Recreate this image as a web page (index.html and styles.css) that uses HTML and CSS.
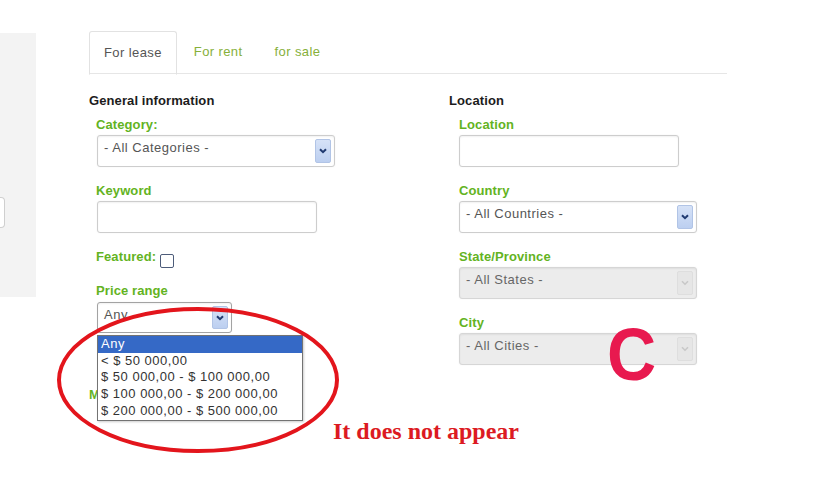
FILE: index.html
```html
<!DOCTYPE html>
<html lang="en">
<head>
  <meta charset="UTF-8" />
  <title>Property search</title>
  <link rel="stylesheet" href="styles.css">
</head>
<body>

  <div class="page">
    <aside class="side">
      <div class="side-input"></div>
    </aside>

    <main class="content">
      <ul class="tabs">
        <li class="tab active">For lease</li>
        <li class="tab">For rent</li>
        <li class="tab">for sale</li>
      </ul>

      <div class="columns">
        <section class="col col-left">
          <h3>General information</h3>

          <div class="field">
            <label>Category:</label>
            <div class="select w238">
              <span class="select-text">- All Categories -</span>
              <span class="select-btn"><svg width="8" height="6" viewBox="0 0 8 6"><path d="M1 1.2 L4 4.2 L7 1.2" fill="none" stroke="#203a70" stroke-width="2"/></svg></span>
            </div>
          </div>

          <div class="field">
            <label>Keyword</label>
            <div class="input w220"></div>
          </div>

          <div class="field field-check">
            <label>Featured:</label>
            <span class="checkbox"></span>
          </div>

          <div class="field field-price">
            <label>Price range</label>
            <div class="select select-focus w135">
              <span class="select-text">Any</span>
              <span class="select-btn"><svg width="8" height="6" viewBox="0 0 8 6"><path d="M1 1.2 L4 4.2 L7 1.2" fill="none" stroke="#203a70" stroke-width="2"/></svg></span>
            </div>
            <ul class="dropdown">
              <li class="selected">Any</li>
              <li>&lt; $ 50 000,00</li>
              <li>$ 50 000,00 - $ 100 000,00</li>
              <li>$ 100 000,00 - $ 200 000,00</li>
              <li>$ 200 000,00 - $ 500 000,00</li>
            </ul>
          </div>

          <div class="field field-more">
            <label>M</label>
          </div>
        </section>

        <section class="col col-right">
          <h3>Location</h3>

          <div class="field">
            <label>Location</label>
            <div class="input w220"></div>
          </div>

          <div class="field">
            <label>Country</label>
            <div class="select w238">
              <span class="select-text">- All Countries -</span>
              <span class="select-btn"><svg width="8" height="6" viewBox="0 0 8 6"><path d="M1 1.2 L4 4.2 L7 1.2" fill="none" stroke="#203a70" stroke-width="2"/></svg></span>
            </div>
          </div>

          <div class="field">
            <label>State/Province</label>
            <div class="select disabled w238">
              <span class="select-text">- All States -</span>
              <span class="select-btn"><svg width="8" height="6" viewBox="0 0 8 6"><path d="M1 1.2 L4 4.2 L7 1.2" fill="none" stroke="#c8c8c8" stroke-width="1.6"/></svg></span>
            </div>
          </div>

          <div class="field">
            <label>City</label>
            <div class="select disabled w238">
              <span class="select-text">- All Cities -</span>
              <span class="select-btn"><svg width="8" height="6" viewBox="0 0 8 6"><path d="M1 1.2 L4 4.2 L7 1.2" fill="none" stroke="#c8c8c8" stroke-width="1.6"/></svg></span>
            </div>
          </div>
        </section>
      </div>
    </main>
  </div>

  <!-- annotations drawn over the screenshot -->
  <svg class="annot-ellipse" width="829" height="490" viewBox="0 0 829 490">
    <ellipse cx="198" cy="380" rx="139" ry="71" fill="none" stroke="#e3151c" stroke-width="4"/>
  </svg>
  <div class="annot-text">It does not appear</div>
  <div class="annot-c">C</div>

</body>
</html>
```

FILE: styles.css
```css
* {
  box-sizing: border-box;
  margin: 0;
  padding: 0;
}

body {
  font-family: 'Liberation Sans', Arial, sans-serif;
  background-color: #ffffff;
  color: #333;
  width: 829px;
  height: 490px;
  overflow: hidden;
  position: relative;
}

.page {
  display: flex;
}

/* left grey strip */
.side {
  width: 36px;
  height: 264px;
  margin-top: 33px;
  background-color: #f3f3f3;
  overflow: hidden;
  padding-top: 164px;
}

.side-input {
  width: 5px;
  height: 31px;
  background-color: #fff;
  border: 1px solid #cfcfcf;
  border-left: none;
  border-radius: 0 4px 4px 0;
}

.content {
  margin-left: 53px;
  width: 638px;
}

/* tabs */
.tabs {
  list-style: none;
  display: flex;
  margin-top: 31px;
  height: 43px;
  border-bottom: 1px solid #e6e6e6;
}

.tab {
  padding: 0 16px;
  line-height: 42px;
  font-size: 13px;
  letter-spacing: 0.4px;
  color: #86b03a;
}

.tab.active {
  padding: 0 14px;
  color: #555;
  border: 1px solid #e2e2e2;
  border-bottom-color: #fff;
  border-radius: 3px 3px 0 0;
  line-height: 41px;
  height: 44px;
  margin-right: 1px;
}

/* columns */
.columns {
  display: flex;
  margin-top: 19px;
}

.col-left {
  width: 360px;
}

.col-right {
  flex: 1;
}

h3 {
  font-size: 13px;
  line-height: 16px;
  letter-spacing: 0.1px;
  color: #1c1c1c;
  margin-bottom: 9px;
}

.field {
  margin-bottom: 17px;
}

.col-left .field {
  padding-left: 7px;
}

.col-right .field {
  padding-left: 10px;
}

.field label {
  display: block;
  font-size: 13px;
  font-weight: bold;
  line-height: 14px;
  letter-spacing: 0.1px;
  color: #63b322;
  margin-bottom: 3px;
}

.col-left .field .input,
.col-left .field .select {
  margin-left: 1px;
}

.input,
.select {
  height: 32px;
  background-color: #fff;
  border: 1px solid #cdcdcd;
  border-radius: 3px;
  box-shadow: inset 0 1px 2px rgba(0, 0, 0, 0.06), 0 0 2px rgba(0, 0, 0, 0.05);
}

.w220 { width: 220px; }
.w238 { width: 238px; }
.w135 { width: 135px; }

.select {
  display: flex;
  align-items: flex-start;
}

.select-text {
  flex: 1;
  padding: 5px 0 0 6px;
  font-size: 13px;
  letter-spacing: 0.5px;
  line-height: 14px;
  color: #555;
  white-space: nowrap;
}

.select-btn {
  align-self: stretch;
  width: 16px;
  margin: 3px 3px 3px 0;
  display: flex;
  align-items: center;
  justify-content: center;
  background: linear-gradient(#d6e2f7, #bccff0);
  border: 1px solid #b1c4e6;
  border-radius: 2px;
}

.select.disabled {
  background-color: #ececec;
  border-color: #d6d6d6;
}

.select.disabled .select-text {
  color: #666;
}

.select.disabled .select-btn {
  background: #e6e6e6;
  border-color: #dedede;
}

/* featured checkbox row */
.field-check {
  display: flex;
  align-items: flex-start;
  height: 20px;
  margin-bottom: 14px;
}

.field-check label {
  margin-bottom: 0;
}

.checkbox {
  width: 14px;
  height: 14px;
  margin: 4px 0 0 4px;
  border: 1px solid #4d5c7a;
  border-radius: 2px;
  background-color: #fff;
}

/* price range with its open list */
.field-price {
  position: relative;
  margin-bottom: 0;
}

.field-price .select {
  height: 31px;
  margin-top: 4px;
}

.select-focus {
  border-color: #a3a3a3;
}

.dropdown {
  position: absolute;
  left: 8px;
  top: 51px;
  width: 206px;
  list-style: none;
  background-color: #fff;
  border: 1px solid #737373;
  box-shadow: 1px 1px 2px rgba(0, 0, 0, 0.2);
  z-index: 2;
}

.dropdown li {
  font-size: 13px;
  letter-spacing: 0.5px;
  line-height: 16.7px;
  padding-left: 3px;
  color: #333;
  white-space: nowrap;
}

.dropdown li.selected {
  background-color: #3569c6;
  color: #fff;
}

.col-left .field-more {
  padding-left: 0;
  margin-top: 55px;
}

/* annotations */
.annot-ellipse {
  position: absolute;
  left: 0;
  top: 0;
  z-index: 5;
}

.annot-text {
  position: absolute;
  left: 333px;
  top: 417px;
  font-family: 'Liberation Serif', 'Times New Roman', serif;
  font-weight: bold;
  font-size: 24px;
  line-height: 28px;
  color: #dc1a22;
  z-index: 5;
}

.annot-c {
  position: absolute;
  left: 607px;
  top: 318px;
  font-family: 'Liberation Sans', Arial, sans-serif;
  font-weight: bold;
  font-size: 74px;
  line-height: 74px;
  color: #e8194f;
  transform: scaleX(0.92);
  transform-origin: left top;
  z-index: 5;
}
```
